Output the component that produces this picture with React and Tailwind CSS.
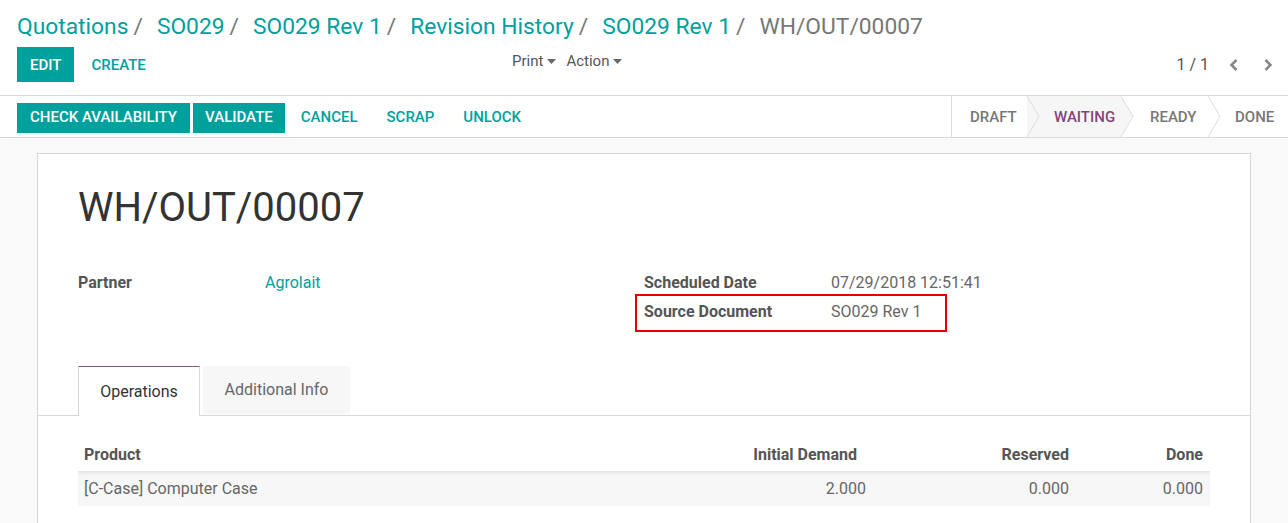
import React from "react";

const TEAL = "text-[#00A09D]";

function Caret() {
  return (
    <svg width="9" height="5" viewBox="0 0 9 5" className="ml-[4px] inline-block">
      <path d="M0 0 L9 0 L4.5 5 Z" fill="#666" />
    </svg>
  );
}

function Chevron({ dir }) {
  return (
    <svg width="10" height="14" viewBox="0 0 10 14">
      {dir === "left" ? (
        <path d="M7.5 2 L2.5 7 L7.5 12" stroke="#888" strokeWidth="2.6" fill="none" />
      ) : (
        <path d="M2.5 2 L7.5 7 L2.5 12" stroke="#888" strokeWidth="2.6" fill="none" />
      )}
    </svg>
  );
}

function StageArrow({ fill }) {
  return (
    <svg
      width="14"
      height="41"
      viewBox="0 0 14 41"
      className="absolute right-[-13px] top-0 z-10"
    >
      {fill && <path d="M0 0 L1 0 L13 20.5 L1 41 L0 41 Z" fill={fill} />}
      <path d="M1 0 L13 20.5 L1 41" stroke="#dcdcdc" strokeWidth="1" fill="none" />
    </svg>
  );
}

const crumbs = [
  { k: "a", t: "Quotations" },
  { k: "b", t: "SO029" },
  { k: "c", t: "SO029 Rev 1" },
  { k: "d", t: "Revision History" },
  { k: "e", t: "SO029 Rev 1" },
];

export default function App() {
  return (
    <div className="w-[1288px] h-[523px] overflow-hidden bg-white font-['Roboto',sans-serif] text-[#4c4c4c]">
      {/* Control panel */}
      <div className="border-b border-[#d9d9d9]">
        <div className="flex items-center pl-[17px] pt-[12px] h-[42px] text-[22.8px] leading-[30px]">
          {crumbs.map((c) => (
            <React.Fragment key={c.k}>
              <span className="text-[#00A09D]">{c.t}</span>
              <span className="text-[#777] ml-[5px] mr-[14px]">/</span>
            </React.Fragment>
          ))}
          <span className="text-[#777]">WH/OUT/00007</span>
        </div>
        <div className="flex items-center h-[35px] mt-[5px] mb-[13px] pl-[17px] pr-[15px]">
          <div className="flex items-center gap-[4px] w-[480px]">
            <button className="h-[35px] px-[13px] pt-[2px] bg-[#00A09D] text-white text-[15px] font-medium uppercase">
              Edit
            </button>
            <button className={`h-[35px] px-[13px] pt-[2px] ${TEAL} text-[15px] font-medium uppercase`}>
              Create
            </button>
          </div>
          <div className="flex items-center gap-[10px] ml-[15px] -mt-[7px] text-[15px] text-[#555]">
            <span className="flex items-center">
              Print
              <Caret />
            </span>
            <span className="flex items-center">
              Action
              <Caret />
            </span>
          </div>
          <div className="flex-1" />
          <div className="flex items-center text-[16px] text-[#555]">
            <span>1 / 1</span>
            <span className="ml-[20px]">
              <Chevron dir="left" />
            </span>
            <span className="ml-[24px]">
              <Chevron dir="right" />
            </span>
          </div>
        </div>
      </div>

      {/* Status bar */}
      <div className="flex items-center h-[42px] border-b border-[#d9d9d9]">
        <div className="flex items-center gap-[3px] pl-[17px] pt-[2px]">
          <button className="h-[30px] px-[13px] bg-[#00A09D] text-white text-[15px] font-medium uppercase">
            Check Availability
          </button>
          <button className="h-[30px] px-[12px] bg-[#00A09D] text-white text-[15px] font-medium uppercase">
            Validate
          </button>
          <button className={`h-[30px] px-[13px] ${TEAL} text-[15px] font-medium uppercase`}>
            Cancel
          </button>
          <button className={`h-[30px] px-[13px] ${TEAL} text-[15px] font-medium uppercase`}>
            Scrap
          </button>
          <button className={`h-[30px] px-[13px] ${TEAL} text-[15px] font-medium uppercase`}>
            Unlock
          </button>
        </div>
        <div className="flex-1" />
        <div className="flex h-[41px] border-l border-[#dcdcdc] text-[15px] font-medium uppercase text-[#777]">
          <div className="relative w-[75px] pl-[18px] pt-[2px] flex items-center">
            Draft
            <StageArrow />
          </div>
          <div className="relative w-[94px] pl-[27px] pt-[2px] flex items-center bg-[#f6f6f6] text-[#80467a]">
            Waiting
            <StageArrow fill="#f6f6f6" />
          </div>
          <div className="relative w-[87px] pl-[29px] pt-[2px] flex items-center">
            Ready
            <StageArrow />
          </div>
          <div className="relative flex-1 w-[80px] pl-[27px] pt-[2px] flex items-center">Done</div>
        </div>
      </div>

      {/* Sheet area */}
      <div className="bg-[#f9f9f9] px-[37px] pt-[15px] h-[400px]">
        <div className="bg-white border border-[#d4d4d4] pt-[29px] h-[400px]">
          <div className="px-[40px]">
            <h1 className="text-[40px] leading-[50px] text-[#333]">WH/OUT/00007</h1>
            <div className="grid grid-cols-2 mt-[38px] text-[16px] leading-[24px]">
              <div className="flex">
                <div className="w-[187px] font-bold text-[#555]">Partner</div>
                <div className="text-[#00A09D]">Agrolait</div>
              </div>
              <div className="flex flex-col gap-[5px]">
                <div className="flex">
                  <div className="w-[187px] font-bold text-[#555]">Scheduled Date</div>
                  <div className="text-[#666]">07/29/2018 12:51:41</div>
                </div>
                <div className="relative flex">
                  <div className="w-[187px] font-bold text-[#555]">Source Document</div>
                  <div className="text-[#666]">SO029 Rev 1</div>
                  <div className="absolute left-[-9px] top-[-6px] w-[312px] h-[38px] border-2 border-[#e80000]" />
                </div>
              </div>
            </div>
          </div>

          {/* Tabs */}
          <div className="mt-[42px] border-b border-[#d9d9d9] px-[40px] flex items-end h-[50px]">
            <div className="h-[50px] w-[122px] -mb-px bg-white border-t border-t-[#875A7B] border-x border-x-[#d9d9d9] flex items-center justify-center text-[16px] text-[#333]">
              Operations
            </div>
            <div className="h-[48px] ml-[3px] mb-px w-[147px] bg-[#f7f7f7] flex items-center justify-center text-[16px] text-[#666]">
              Additional Info
            </div>
          </div>

          {/* Table */}
          <div className="px-[40px] pt-[22px] text-[16px]">
            <div className="flex h-[33px] items-center font-bold text-[#555]">
              <div className="flex-1 pl-[6px]">Product</div>
              <div className="w-[200px] text-right pr-[16px]">Initial Demand</div>
              <div className="w-[203px] text-right pr-[7px]">Reserved</div>
              <div className="w-[134px] text-right pr-[7px]">Done</div>
            </div>
            <div className="flex h-[35px] items-center bg-[#f7f7f7] text-[#666] shadow-[inset_0_4px_4px_-3px_rgba(0,0,0,0.12)]">
              <div className="flex-1 pl-[6px]">[C-Case] Computer Case</div>
              <div className="w-[200px] text-right pr-[7px]">2.000</div>
              <div className="w-[203px] text-right pr-[7px]">0.000</div>
              <div className="w-[134px] text-right pr-[7px]">0.000</div>
            </div>
          </div>
        </div>
      </div>
    </div>
  );
}
